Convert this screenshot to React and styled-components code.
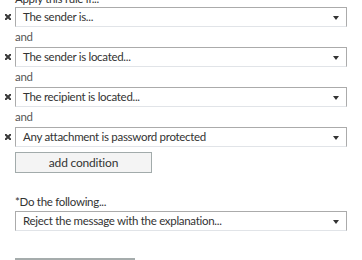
import React from "react";
import styled, { createGlobalStyle } from "styled-components";

const Global = createGlobalStyle`
  html, body { margin: 0; padding: 0; background: #fff; }
  body {
    font-family: "Segoe UI", Lato, "Open Sans", sans-serif;
    font-size: 11.5px;
    letter-spacing: -0.3px;
    color: #333;
    overflow: hidden;
  }
`;

const Page = styled.div`
  width: 362px;
  height: 260px;
  padding-left: 15px;
  box-sizing: border-box;
  display: flex;
  flex-direction: column;
  align-items: flex-start;
`;

const Label = styled.div`
  height: 16px;
  line-height: 16px;
  color: #333;
  margin-top: ${(p) => p.$mt || 0}px;
`;

const Row = styled.div`
  position: relative;
  display: flex;
  align-items: center;
`;

const Remove = styled.span`
  position: absolute;
  left: -10px;
  top: 7px;
  width: 6px;
  height: 6px;
  display: block;
  line-height: 0;
`;

const Select = styled.div`
  width: 332px;
  height: 20px;
  box-sizing: border-box;
  border: 1px solid #ababab;
  border-bottom-color: #e1e4e8;
  background: #fff;
  display: flex;
  align-items: center;
  padding-left: 7px;
  padding-right: 7px;
  margin-top: ${(p) => p.$mt || 0}px;
`;

const SelectText = styled.span`
  flex: 1;
  line-height: 18px;
  color: #333;
  white-space: nowrap;
`;

const Arrow = styled.span`
  width: 0;
  height: 0;
  border-left: 3px solid transparent;
  border-right: 3px solid transparent;
  border-top: 4px solid #333;
  margin-top: 1px;
`;

const Connector = styled.div`
  height: 20px;
  line-height: 20px;
  color: #555;
`;

const Button = styled.div`
  width: 137px;
  height: 21px;
  box-sizing: border-box;
  margin-top: 5px;
  border: 1px solid #a2abab;
  background: #f4f4f4;
  color: #333;
  font-size: 12px;
  letter-spacing: -0.2px;
  display: flex;
  align-items: center;
  justify-content: center;
  line-height: 19px;
`;

const Rule = styled.div`
  margin-top: 27px;
  width: 120px;
  height: 0;
  border-top: 2px solid #a5acac;
`;

const XIcon = () => (
  <svg width="6" height="6" viewBox="0 0 6 6">
    <path d="M0.8 0.8 L5.2 5.2 M5.2 0.8 L0.8 5.2" stroke="#3a3a3a" strokeWidth="2" strokeLinecap="square" />
  </svg>
);

const Condition = ({ text }) => (
  <Row>
    <Remove>
      <XIcon />
    </Remove>
    <Select>
      <SelectText>{text}</SelectText>
      <Arrow />
    </Select>
  </Row>
);

const conditions = [
  "The sender is...",
  "The sender is located...",
  "The recipient is located...",
  "Any attachment is password protected",
];

export default function App() {
  return (
    <>
      <Global />
      <Page>
        <Label $mt={-9}>Apply this rule if...</Label>
        {conditions.map((c, i) => (
          <React.Fragment key={c}>
            {i > 0 && <Connector>and</Connector>}
            <Condition text={c} />
          </React.Fragment>
        ))}
        <Button>add condition</Button>
        <Label $mt={21}>*Do the following...</Label>
        <Select $mt={1}>
          <SelectText>Reject the message with the explanation...</SelectText>
          <Arrow />
        </Select>
        <Rule />
      </Page>
    </>
  );
}
